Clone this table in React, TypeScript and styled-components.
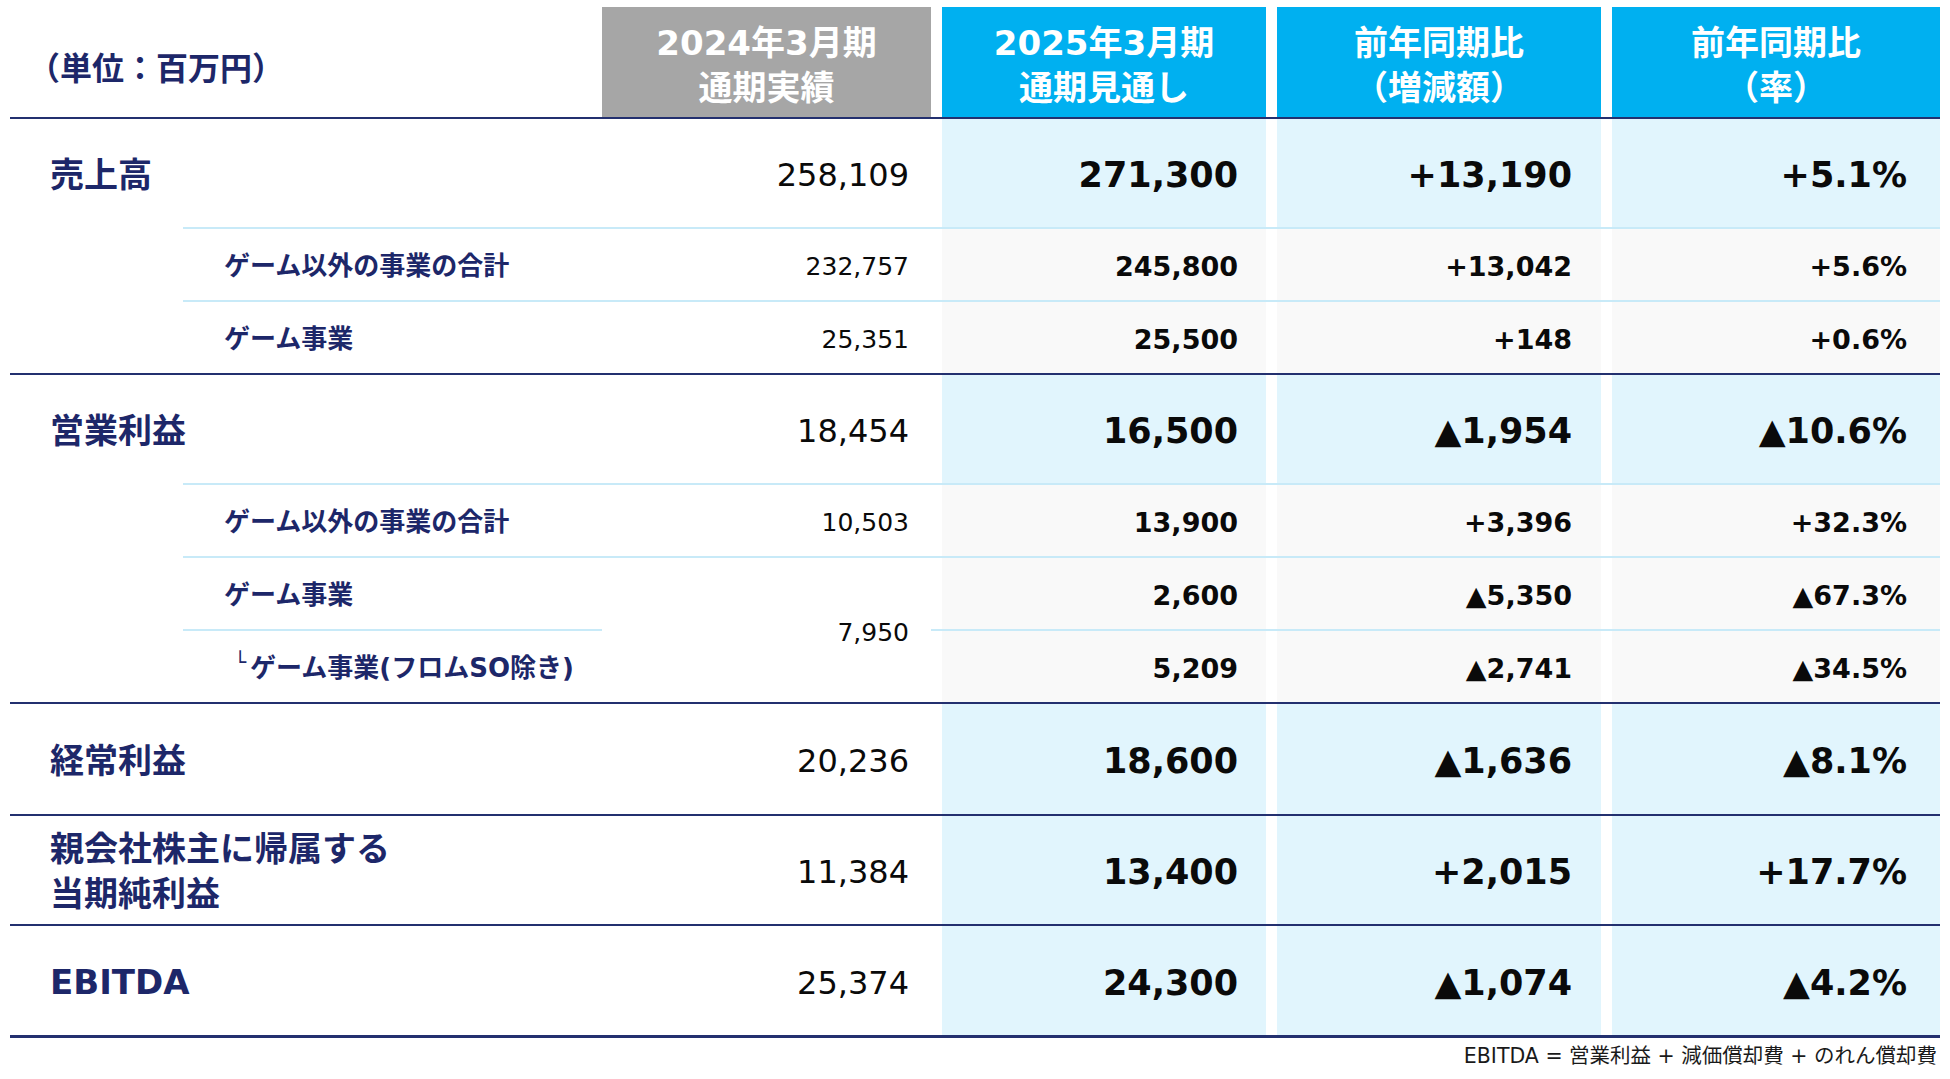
import React from "react";
import styled, { createGlobalStyle, css } from "styled-components";

const C = {
  navy: "#1d2769",
  rule: "#23306f",
  light: "#c8eaf8",
  gray: "#a6a6a6",
  blue: "#00b0f0",
  cyan: "#e1f5fd",
  pale: "#f9f9f9",
  ink: "#0a0a0a",
};

const COLS = "581px 329px 324px 324px 328px";
const PAD = [22, 28, 29, 33];

const GlobalStyle = createGlobalStyle`
  html, body { margin: 0; padding: 0; background: #ffffff; }
  body { font-family: "DejaVu Sans", "Noto Sans CJK JP", sans-serif; }
`;

const Page = styled.div`
  width: 1950px;
  height: 1079px;
  box-sizing: border-box;
  padding: 7px 10px 0 10px;
  display: flex;
  flex-direction: column;
`;

const HeaderRow = styled.div`
  display: grid;
  grid-template-columns: ${COLS};
  column-gap: 11px;
  height: 110px;
  border-bottom: 2px solid ${C.rule};
`;

const UnitCell = styled.div`
  display: flex;
  align-items: center;
  padding: 8px 0 0 18px;
  font-family: "Noto Sans CJK JP", sans-serif;
  font-weight: 700;
  font-size: 32px;
  color: ${C.navy};
`;

const HeadCell = styled.div<{ $tone: "gray" | "blue" }>`
  display: flex;
  flex-direction: column;
  align-items: center;
  justify-content: center;
  padding-top: 7px;
  box-sizing: border-box;
  background: ${(p) => (p.$tone === "gray" ? C.gray : C.blue)};
  color: #ffffff;
  font-family: "DejaVu Sans", "Noto Sans CJK JP", sans-serif;
  font-weight: 700;
  font-size: 34px;
  line-height: 45px;
  white-space: nowrap;
`;

const Group = styled.div<{ $last?: boolean }>`
  display: flex;
  flex-direction: column;
  border-bottom: ${(p) => (p.$last ? 3 : 2)}px solid ${C.rule};
`;

const stripBottom = css`
  padding-bottom: 2px;
  background: linear-gradient(${C.light}, ${C.light}) no-repeat left 173px bottom /
    calc(100% - 173px) 2px;
`;

const Row = styled.div<{ $h: number; $strip?: boolean }>`
  display: grid;
  grid-template-columns: ${COLS};
  column-gap: 11px;
  height: ${(p) => p.$h}px;
  ${(p) => p.$strip && stripBottom}
`;

const SplitBlock = styled.div`
  display: grid;
  grid-template-columns: ${COLS};
  grid-template-rows: 71px 71px;
  column-gap: 11px;
  row-gap: 2px;
  background: linear-gradient(${C.light}, ${C.light}) no-repeat left 173px top 71px /
    calc(100% - 173px) 2px;
`;

const Label = styled.div<{ $sub?: boolean }>`
  display: flex;
  flex-direction: column;
  justify-content: center;
  box-sizing: border-box;
  padding-top: 4px;
  padding-left: ${(p) => (p.$sub ? 214 : 40)}px;
  font-family: "DejaVu Sans", "Noto Sans CJK JP", sans-serif;
  font-weight: 700;
  font-size: ${(p) => (p.$sub ? 26 : 34)}px;
  line-height: 45px;
  color: ${C.navy};
  white-space: nowrap;
`;

const SubIndentLabel = styled(Label)`
  flex-direction: row;
  align-items: center;
  justify-content: flex-start;
  padding-left: 224px;
`;

const Corner = styled.span`
  font-family: "DejaVu Sans", sans-serif;
  font-weight: 400;
  font-size: 20px;
  line-height: 1;
  align-self: center;
  margin-top: -14px;
  margin-right: 4px;
`;

const Value = styled.div<{ $col: number; $main: boolean; $span?: boolean }>`
  display: flex;
  align-items: center;
  justify-content: flex-end;
  box-sizing: border-box;
  padding-top: 4px;
  padding-right: ${(p) => PAD[p.$col]}px;
  font-family: "DejaVu Sans", sans-serif;
  color: ${C.ink};
  white-space: nowrap;
  ${(p) =>
    p.$col === 0
      ? css`
          background: #ffffff;
          font-weight: 400;
          font-size: ${p.$main ? 32 : 25}px;
        `
      : css`
          background: ${p.$main ? C.cyan : C.pale};
          font-weight: 700;
          font-size: ${p.$main ? 35 : 27}px;
        `}
  ${(p) =>
    p.$span &&
    css`
      grid-column: 2;
      grid-row: 1 / span 2;
    `}
`;

const Footnote = styled.div`
  margin-top: 6px;
  padding-right: 3px;
  text-align: right;
  font-family: "DejaVu Sans", "Noto Sans CJK JP", sans-serif;
  font-size: 20.5px;
  line-height: 24px;
  color: #1a1a1a;
`;

type Vals = [string, string, string, string];

const Values: React.FC<{ v: string[]; main: boolean; start?: number }> = ({
  v,
  main,
  start = 0,
}) => (
  <>
    {v.map((x, i) => (
      <Value key={i} $col={i + start} $main={main}>
        {x}
      </Value>
    ))}
  </>
);

const MainRow: React.FC<{
  label: React.ReactNode;
  v: Vals;
  h: number;
  strip?: boolean;
}> = ({ label, v, h, strip }) => (
  <Row $h={h} $strip={strip}>
    <Label>{label}</Label>
    <Values v={v} main />
  </Row>
);

const SubRow: React.FC<{ label: string; v: Vals; strip?: boolean }> = ({
  label,
  v,
  strip,
}) => (
  <Row $h={71} $strip={strip}>
    <Label $sub>{label}</Label>
    <Values v={v} main={false} />
  </Row>
);

export default function App() {
  return (
    <>
      <GlobalStyle />
      <Page>
        <HeaderRow>
          <UnitCell>（単位：百万円）</UnitCell>
          <HeadCell $tone="gray">
            <span>2024年3月期</span>
            <span>通期実績</span>
          </HeadCell>
          <HeadCell $tone="blue">
            <span>2025年3月期</span>
            <span>通期見通し</span>
          </HeadCell>
          <HeadCell $tone="blue">
            <span>前年同期比</span>
            <span>（増減額）</span>
          </HeadCell>
          <HeadCell $tone="blue">
            <span>前年同期比</span>
            <span>（率）</span>
          </HeadCell>
        </HeaderRow>

        <Group>
          <MainRow label="売上高" v={["258,109", "271,300", "+13,190", "+5.1%"]} h={108} strip />
          <SubRow label="ゲーム以外の事業の合計" v={["232,757", "245,800", "+13,042", "+5.6%"]} strip />
          <SubRow label="ゲーム事業" v={["25,351", "25,500", "+148", "+0.6%"]} />
        </Group>

        <Group>
          <MainRow label="営業利益" v={["18,454", "16,500", "▲1,954", "▲10.6%"]} h={108} strip />
          <SubRow label="ゲーム以外の事業の合計" v={["10,503", "13,900", "+3,396", "+32.3%"]} strip />
          <SplitBlock>
            <Value $col={0} $main={false} $span>
              7,950
            </Value>
            <Label $sub>ゲーム事業</Label>
            <Values v={["2,600", "▲5,350", "▲67.3%"]} main={false} start={1} />
            <SubIndentLabel $sub>
              <Corner>└</Corner>
              <span>ゲーム事業(フロムSO除き)</span>
            </SubIndentLabel>
            <Values v={["5,209", "▲2,741", "▲34.5%"]} main={false} start={1} />
          </SplitBlock>
        </Group>

        <Group>
          <MainRow label="経常利益" v={["20,236", "18,600", "▲1,636", "▲8.1%"]} h={110} />
        </Group>

        <Group>
          <MainRow
            label={
              <>
                <span>親会社株主に帰属する</span>
                <span>当期純利益</span>
              </>
            }
            v={["11,384", "13,400", "+2,015", "+17.7%"]}
            h={108}
          />
        </Group>

        <Group $last>
          <MainRow label="EBITDA" v={["25,374", "24,300", "▲1,074", "▲4.2%"]} h={109} />
        </Group>

        <Footnote>EBITDA = 営業利益 + 減価償却費 + のれん償却費</Footnote>
      </Page>
    </>
  );
}
